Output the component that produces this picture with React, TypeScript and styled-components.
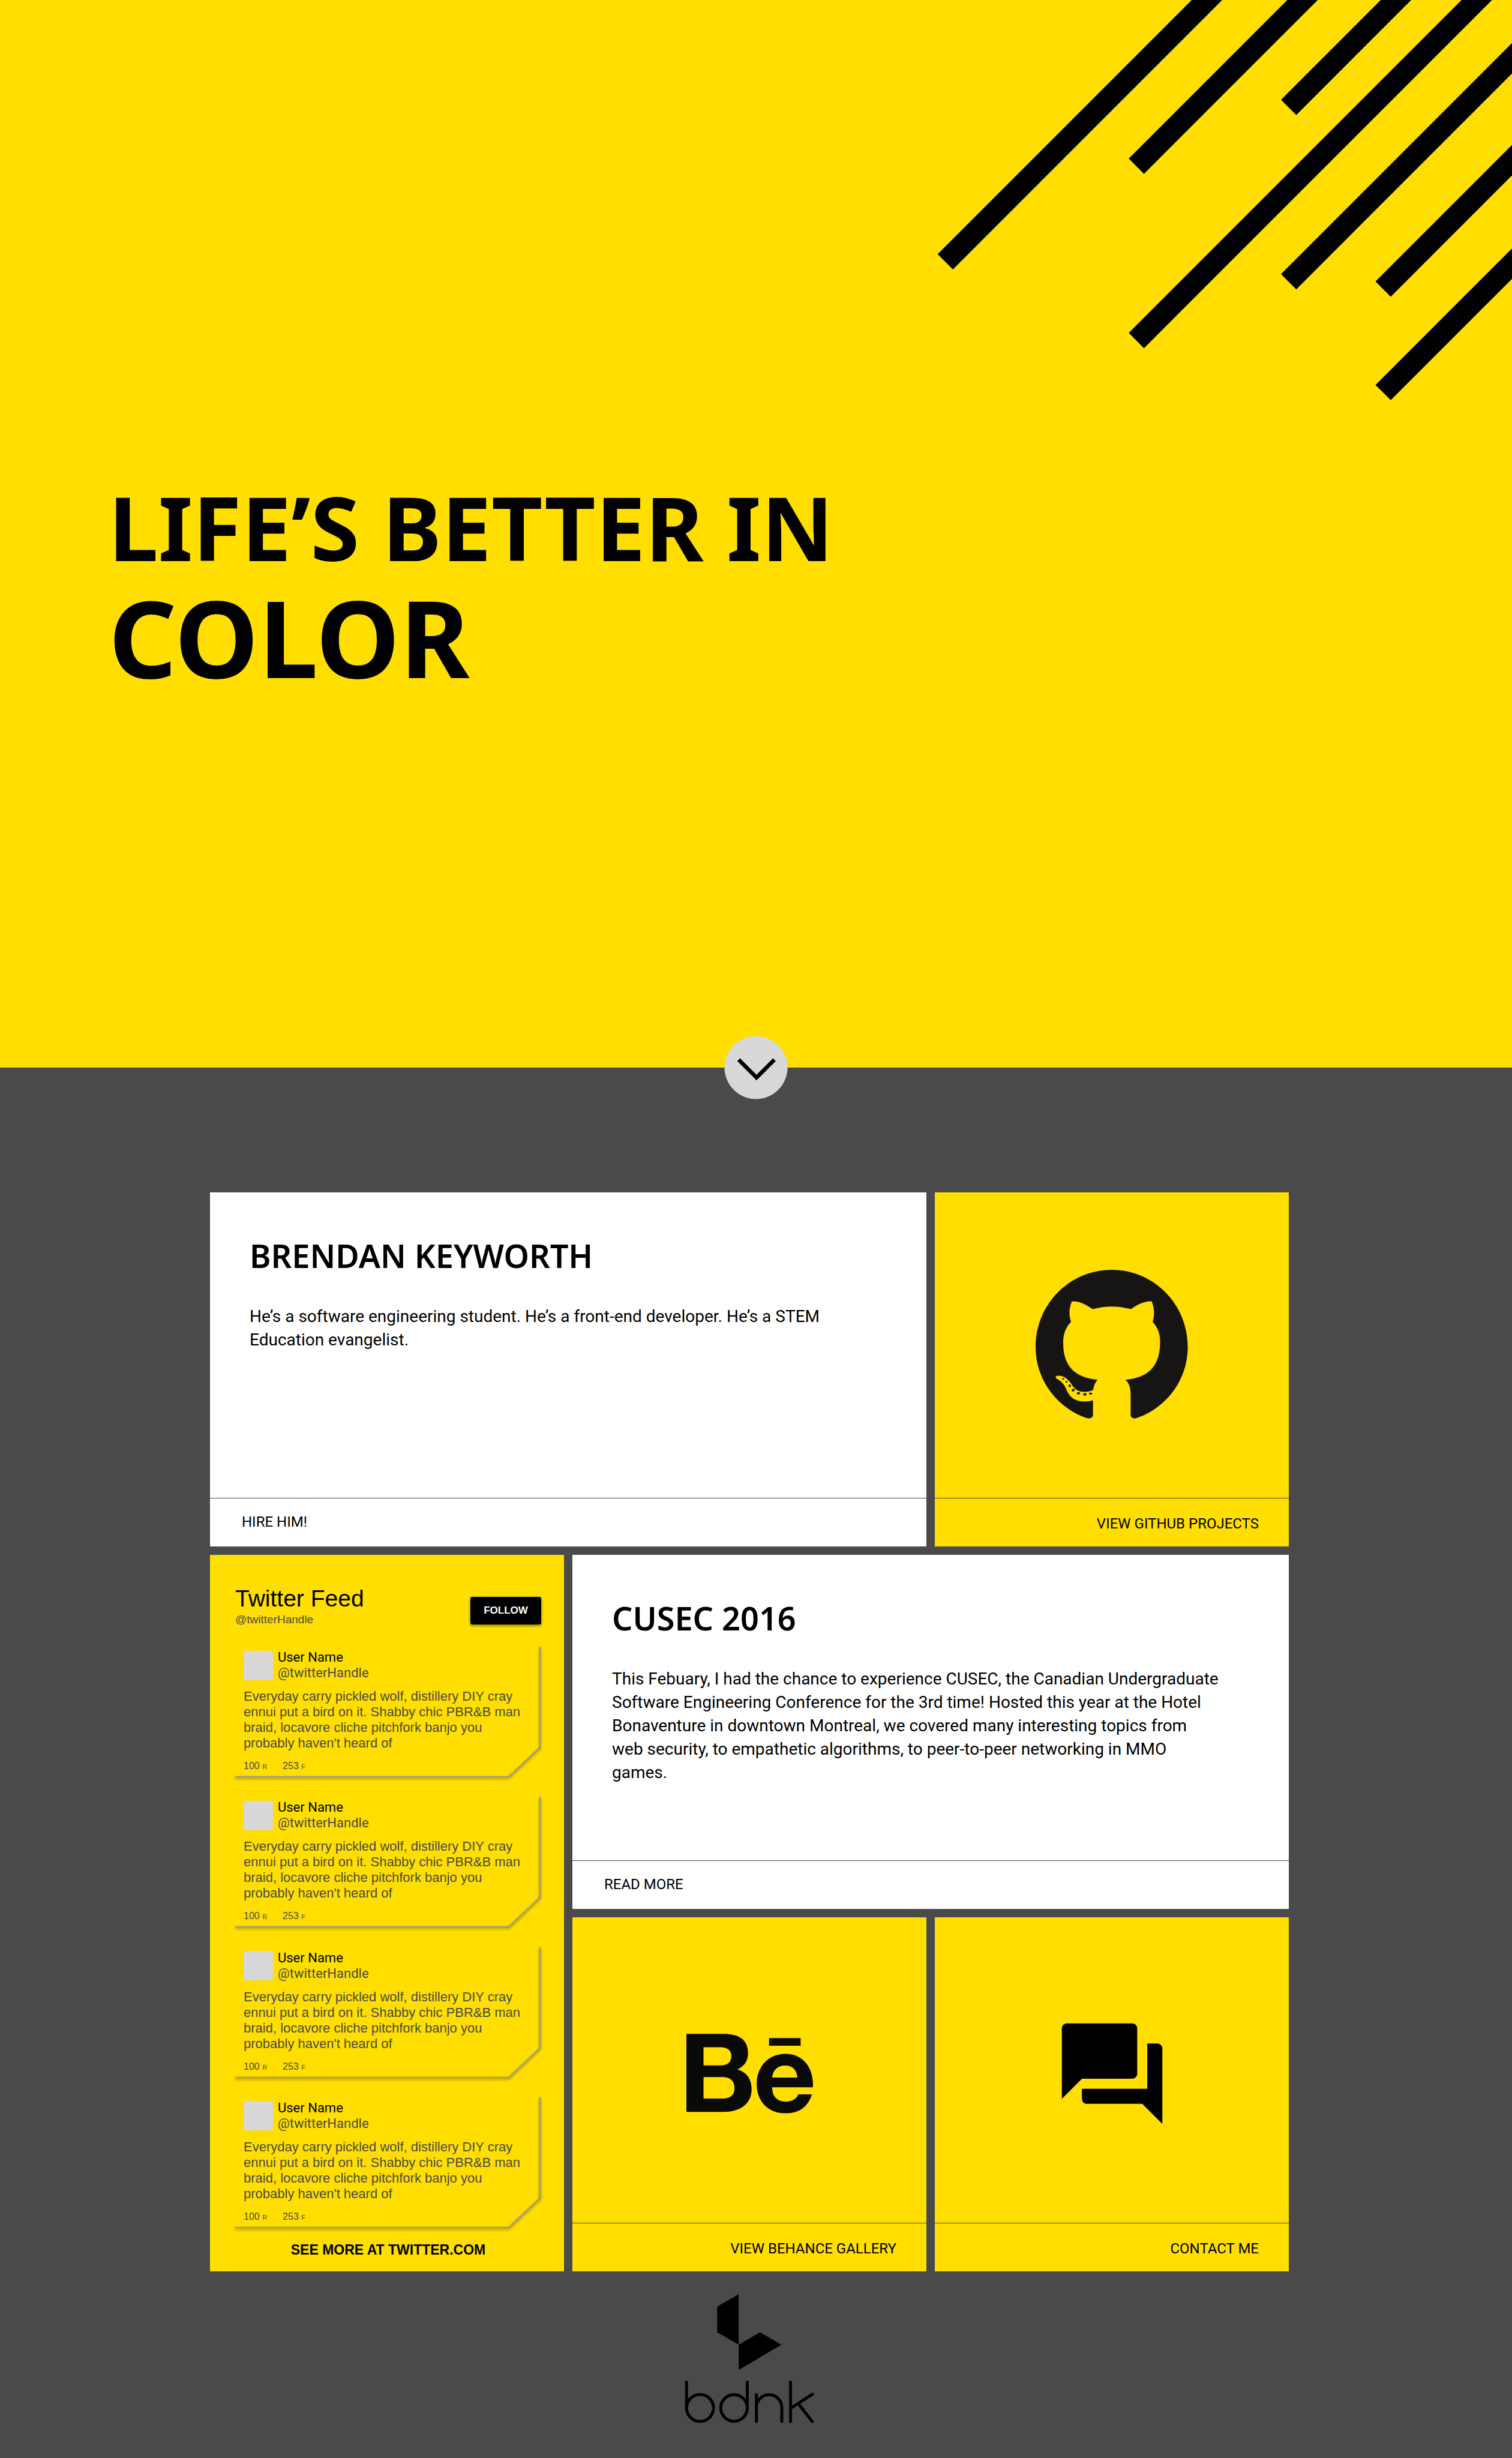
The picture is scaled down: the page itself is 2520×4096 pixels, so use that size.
import React from "react";
import styled, { createGlobalStyle } from "styled-components";
import { FaBehance } from "react-icons/fa";
import { MdForum } from "react-icons/md";

const yellow = "#ffde00";
const charcoal = "#4a4a4a";
const silver = "#d8d8d8";

const display = `"Noto Sans", "Open Sans", sans-serif`;
const roboto = `Roboto, "Liberation Sans", sans-serif`;
const helvetica = `"Liberation Sans", Arial, sans-serif`;

const GlobalStyle = createGlobalStyle`
  *, *::before, *::after { box-sizing: border-box; }
  body {
    margin: 0;
    background: ${charcoal};
    color: #000;
    font-family: ${roboto};
  }
  h1, h2, h3, p, ul { margin: 0; padding: 0; }
  ul { list-style: none; }
  a { color: inherit; text-decoration: none; }
`;

const Hero = styled.header`
  position: relative;
  display: flex;
  flex-direction: column;
  justify-content: flex-end;
  min-height: 1779px;
  padding: 0 181px 625px;
  background: ${yellow};
`;

const Rays = styled.svg`
  position: absolute;
  top: 0;
  right: 0;
  width: 980px;
  height: 700px;
`;

const Headline = styled.h1`
  font-family: ${display};
  font-weight: 700;
`;

const HeadlineLine = styled.span<{ $size: number }>`
  display: block;
  font-size: ${(p) => p.$size}px;
  line-height: 184px;
`;

const ScrollButton = styled.button`
  position: absolute;
  left: 50%;
  bottom: 0;
  width: 105px;
  height: 105px;
  padding: 0;
  border: 0;
  border-radius: 50%;
  background: ${silver};
  transform: translate(-50%, 50%);
  cursor: pointer;

  svg {
    display: block;
    width: 100%;
    height: 100%;
  }
`;

const Main = styled.main`
  padding: 208px 372px 56px 350px;
`;

const Grid = styled.div`
  display: grid;
  grid-template-columns: repeat(3, 1fr);
  grid-auto-rows: 590px;
  gap: 14px;
`;

const Card = styled.article<{ $white?: boolean; $cols?: number; $rows?: number }>`
  display: flex;
  flex-direction: column;
  min-width: 0;
  background: ${(p) => (p.$white ? "#fff" : yellow)};
  grid-column: span ${(p) => p.$cols ?? 1};
  grid-row: span ${(p) => p.$rows ?? 1};
`;

const Story = styled.div`
  flex: 1;
  padding: 66px 116px 0 66px;
`;

const StoryTitle = styled.h2`
  font-family: ${display};
  font-size: 54px;
  font-weight: 600;
  line-height: 78px;
`;

const StoryText = styled.p`
  margin-top: 43px;
  font-size: 28px;
  line-height: 39px;
`;

const IconArea = styled.div<{ $low?: boolean }>`
  flex: 1;
  display: flex;
  align-items: center;
  justify-content: center;
  padding: ${(p) => (p.$low ? "12px 0 0" : "0 0 4px")};
`;

const CardLink = styled.a<{ $end?: boolean }>`
  display: flex;
  align-items: center;
  justify-content: ${(p) => (p.$end ? "flex-end" : "flex-start")};
  height: 81px;
  padding: ${(p) => (p.$end ? "4px 50px 0" : "0 53px 2px")};
  border-top: 1px solid ${charcoal};
  font-size: 24px;
  line-height: 30px;
`;

const Feed = styled(Card)`
  padding: 50px 38px 0 42px;
  font-family: ${helvetica};
`;

const FeedHeader = styled.div`
  display: flex;
  align-items: flex-end;
  justify-content: space-between;
`;

const FeedTitle = styled.h2`
  font-size: 39px;
  font-weight: 400;
  line-height: 46px;
`;

const FeedHandle = styled.p`
  color: ${charcoal};
  font-size: 19px;
  line-height: 24px;
`;

const FollowButton = styled.button`
  width: 118px;
  height: 46px;
  margin-bottom: 4px;
  padding: 0;
  border: 0;
  border-radius: 3px;
  background: #000;
  box-shadow: 0 2px 4px rgba(0, 0, 0, 0.5);
  color: #fff;
  font-family: ${helvetica};
  font-size: 17px;
  font-weight: 700;
  cursor: pointer;
`;

const TweetList = styled.ul`
  flex: 1;
  display: flex;
  flex-direction: column;
  justify-content: space-between;
  margin-top: 33px;
`;

const TweetItem = styled.li`
  position: relative;
  height: 218px;
  padding: 7px 26px 0 14px;
`;

const TweetFrame = styled.svg`
  position: absolute;
  inset: 0;
  width: 100%;
  height: 100%;
  overflow: visible;
  filter: drop-shadow(0 2px 2px rgba(0, 0, 0, 0.5));
`;

const TweetHead = styled.div`
  display: flex;
  align-items: center;
  gap: 8px;
  height: 48px;
`;

const Avatar = styled.span`
  width: 49px;
  height: 49px;
  border-radius: 3px;
  background: ${silver};
`;

const TweetNames = styled.div`
  color: ${charcoal};
  font-family: ${roboto};
  font-size: 22px;
  line-height: 26px;
`;

const UserName = styled.h3`
  color: #000;
  font-size: 22px;
  font-weight: 400;
`;

const TweetText = styled.p`
  margin-top: 15px;
  color: ${charcoal};
  font-size: 22px;
  line-height: 26px;
`;

const TweetStats = styled.div`
  display: flex;
  gap: 26px;
  margin-top: 15px;
  color: ${charcoal};
  font-size: 16px;
  line-height: 20px;

  small {
    font-size: 11px;
  }
`;

const SeeMore = styled.a`
  display: flex;
  align-items: center;
  justify-content: center;
  height: 72px;
  font-size: 23px;
  font-weight: 700;
`;

const Footer = styled.footer`
  display: flex;
  justify-content: center;
  margin-top: 35px;

  svg {
    display: block;
  }
`;

const rays: [number, number][] = [
  [1786, 484],
  [2150, 302],
  [2440, 190],
  [2150, 634],
  [2440, 522],
  [2620, 536],
  [2620, 733],
];

const tweets = [1, 2, 3, 4].map((id) => ({
  id,
  name: "User Name",
  handle: "@twitterHandle",
  text: "Everyday carry pickled wolf, distillery DIY cray ennui put a bird on it. Shabby chic PBR&B man braid, locavore cliche pitchfork banjo you probably haven't heard of",
  retweets: 100,
  favorites: 253,
}));

function Octocat() {
  return (
    <svg width="254" height="248" viewBox="474 368 640 617" preserveAspectRatio="none" fill="#161514" aria-hidden="true">
      <path d="M793.5 368C617 368 474 510 474 687C474 827 566 942 690 983C706 987 715 979 715 968V910Q698 914 680 914C645 914 619 901 605 868C594 841 583 832 570 824C562 819 558 816 558 812C559 808 565 807 572 807C598 808 613 824 630 850C647 876 680 880 716 866C718 850 724 834 735 824C680 818 590 800 590 672C589 640 598 610 623 583C614 560 613 530 626 499C642 497 668 500 714 531Q793 510 874 531C918 501 945 498 962 499C974 530 974 565 965 583C990 610 997 640 997 666C997 800 910 817 851 824C868 838 873 860 873 884V968C873 980 882 986 897 983C1021 942 1113 827 1113 687C1113 510 970 368 793.5 368Z" />
      <ellipse cx="590" cy="820" rx="4.5" ry="3" />
      <ellipse cx="604" cy="832" rx="4.5" ry="4" />
      <ellipse cx="617" cy="849" rx="5" ry="5.5" />
      <ellipse cx="632" cy="867" rx="6" ry="5.5" />
      <ellipse cx="654" cy="880" rx="7" ry="5" />
      <ellipse cx="681" cy="884" rx="7" ry="5" />
      <ellipse cx="705" cy="881" rx="7" ry="4.5" />
    </svg>
  );
}

function Logo() {
  return (
    <svg width="220" height="220" viewBox="130 110 754 754" role="img" aria-label="bdnk">
      <polygon points="323,191 446,120 446,409 323,338" />
      <polygon points="446,409 568,338 690,409 446,553" />
      <g fill="none" stroke="#000" strokeWidth="17" strokeLinecap="round">
        <line x1="148" y1="622" x2="148" y2="770" />
        <circle cx="225" cy="770" r="77" />
        <circle cx="419" cy="770" r="76" />
        <line x1="495" y1="622" x2="495" y2="770" />
        <line x1="547" y1="694" x2="547" y2="848" />
        <path d="M547 767A72.500 72.500 0 0 1 692 767V848" />
        <line x1="742" y1="622" x2="742" y2="848" />
        <line x1="744" y1="771" x2="866" y2="692" />
        <line x1="790" y1="750" x2="866" y2="848" />
      </g>
    </svg>
  );
}

function Tweet({ tweet }: { tweet: (typeof tweets)[number] }) {
  return (
    <TweetItem>
      <TweetFrame viewBox="0 0 510 218" preserveAspectRatio="none" aria-hidden="true">
        <path d="M0 217H456L508 168V0" fill="none" stroke="#979797" strokeWidth="2" />
      </TweetFrame>
      <TweetHead>
        <Avatar />
        <TweetNames>
          <UserName>{tweet.name}</UserName>
          <p>{tweet.handle}</p>
        </TweetNames>
      </TweetHead>
      <TweetText>{tweet.text}</TweetText>
      <TweetStats>
        <span>
          {tweet.retweets} <small>R</small>
        </span>
        <span>
          {tweet.favorites} <small>F</small>
        </span>
      </TweetStats>
    </TweetItem>
  );
}

export default function App() {
  return (
    <>
      <GlobalStyle />
      <Hero>
        <Rays viewBox="1760 0 1120 800" aria-hidden="true">
          {rays.map(([x, y]) => (
            <polygon key={`${x}-${y}`} points={`${x},${y} ${x + 1000},${y - 1000} ${x + 1029},${y - 971} ${x + 29},${y + 29}`} />
          ))}
        </Rays>
        <Headline>
          <HeadlineLine $size={148}>LIFE’S BETTER IN</HeadlineLine>
          <HeadlineLine $size={177}>COLOR</HeadlineLine>
        </Headline>
        <ScrollButton type="button" aria-label="Scroll down">
          <svg viewBox="0 0 120 120" aria-hidden="true">
            <path d="M27 45L61 79L95 45" fill="none" stroke="#000" strokeWidth="7.5" />
          </svg>
        </ScrollButton>
      </Hero>
      <Main>
        <Grid>
          <Card $white $cols={2}>
            <Story>
              <StoryTitle>BRENDAN KEYWORTH</StoryTitle>
              <StoryText>
                He’s a software engineering student. He’s a front-end developer. He’s a STEM Education evangelist.
              </StoryText>
            </Story>
            <CardLink href="#hire">HIRE HIM!</CardLink>
          </Card>
          <Card>
            <IconArea>
              <Octocat />
            </IconArea>
            <CardLink href="#github" $end>VIEW GITHUB PROJECTS</CardLink>
          </Card>
          <Feed $rows={2}>
            <FeedHeader>
              <div>
                <FeedTitle>Twitter Feed</FeedTitle>
                <FeedHandle>@twitterHandle</FeedHandle>
              </div>
              <FollowButton type="button">FOLLOW</FollowButton>
            </FeedHeader>
            <TweetList>
              {tweets.map((tweet) => (
                <Tweet key={tweet.id} tweet={tweet} />
              ))}
            </TweetList>
            <SeeMore href="#twitter">SEE MORE AT TWITTER.COM</SeeMore>
          </Feed>
          <Card $white $cols={2}>
            <Story>
              <StoryTitle>CUSEC 2016</StoryTitle>
              <StoryText>
                This Febuary, I had the chance to experience CUSEC, the Canadian Undergraduate Software Engineering
                Conference for the 3rd time! Hosted this year at the Hotel Bonaventure in downtown Montreal, we covered
                many interesting topics from web security, to empathetic algorithms, to peer-to-peer networking in MMO
                games.
              </StoryText>
            </Story>
            <CardLink href="#cusec">READ MORE</CardLink>
          </Card>
          <Card>
            <IconArea $low>
              <FaBehance size={211} color="#0a0b09" />
            </IconArea>
            <CardLink href="#behance" $end>VIEW BEHANCE GALLERY</CardLink>
          </Card>
          <Card>
            <IconArea $low>
              <MdForum size={201} />
            </IconArea>
            <CardLink href="#contact" $end>CONTACT ME</CardLink>
          </Card>
        </Grid>
        <Footer>
          <Logo />
        </Footer>
      </Main>
    </>
  );
}
